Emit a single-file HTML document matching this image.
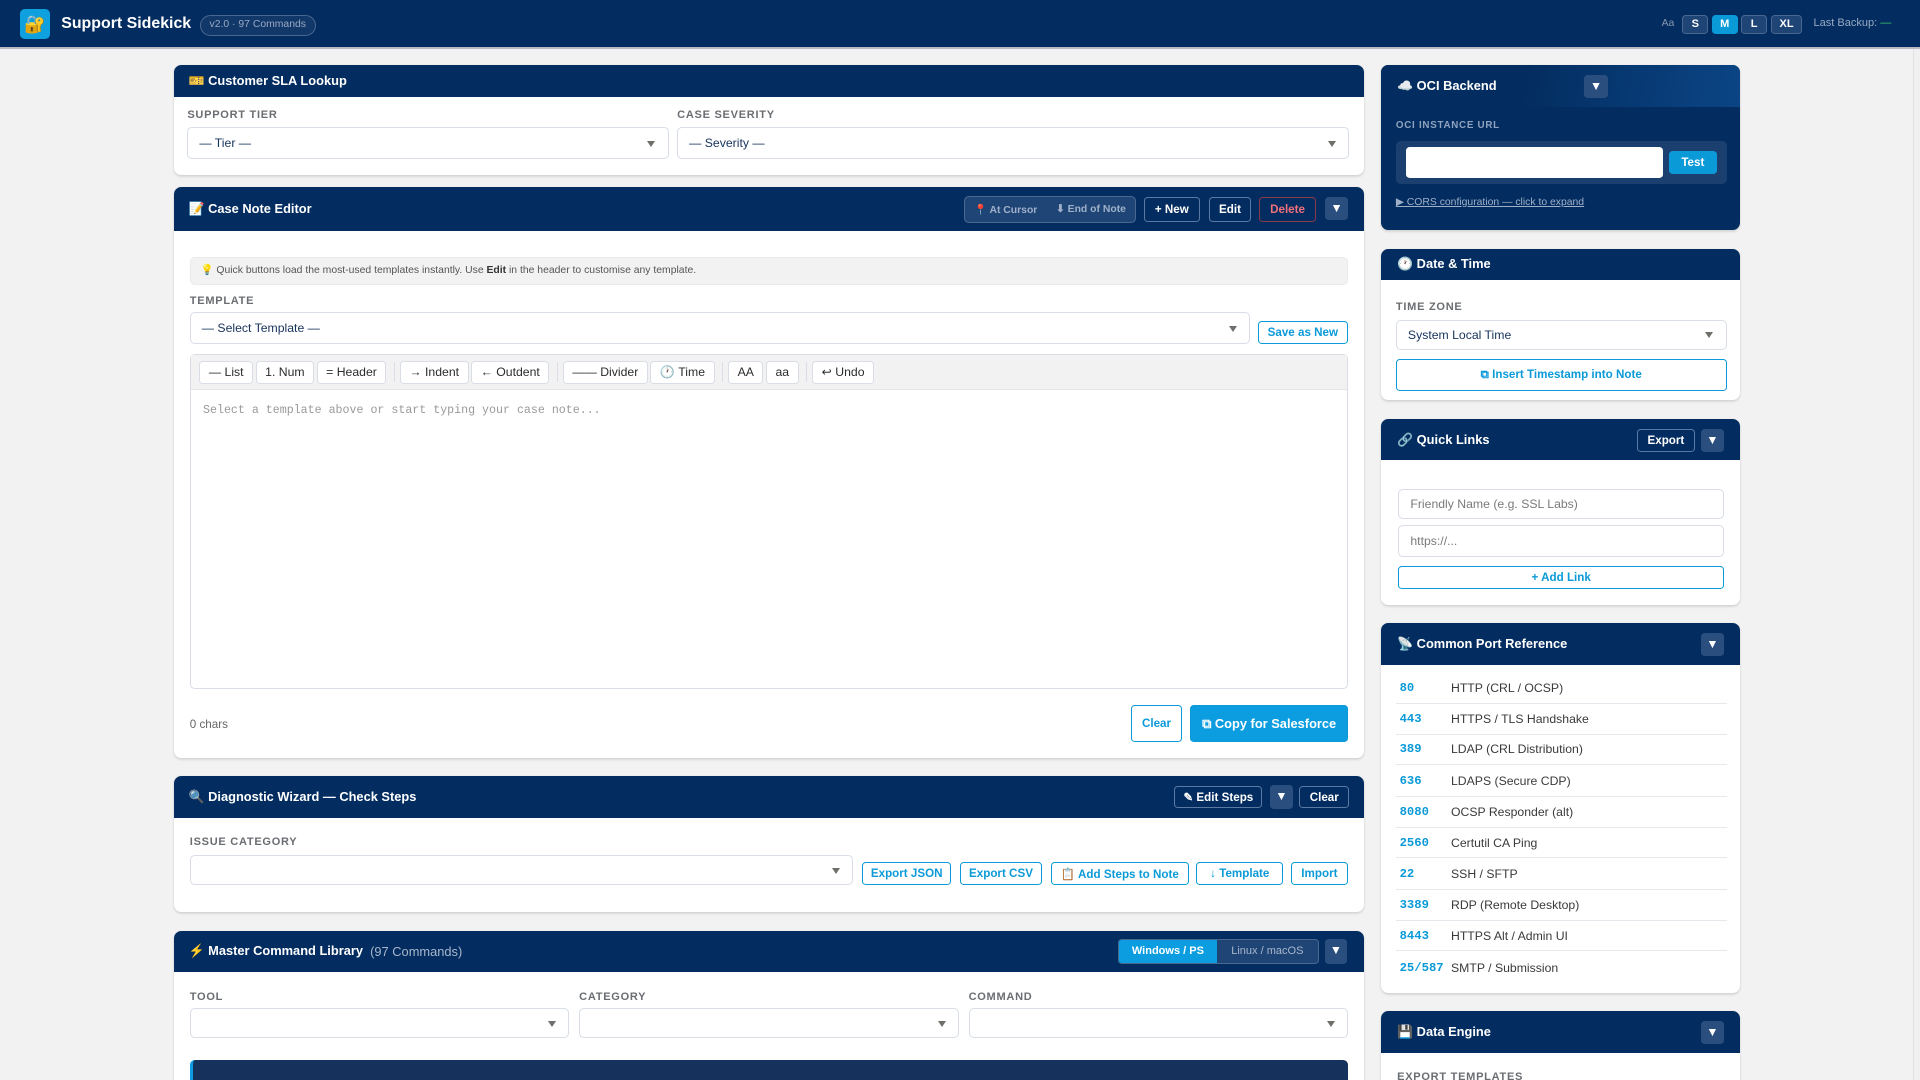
<!DOCTYPE html>
<html><head><meta charset="utf-8"><style>
html{zoom:1.22449;overflow:hidden;height:882px}
*{box-sizing:border-box;margin:0;padding:0}
body{width:1568px;height:882px;overflow:hidden;background:#f3f2f2;font-family:"Liberation Sans",sans-serif;color:#1d2b3f;font-size:11px}
#w{position:relative;width:1568px;height:882px;overflow:hidden}
.top{position:absolute;left:0;top:0;width:1568px;height:40px;background:#032d60;border-bottom:2px solid #b8bcc2}
.logo{position:absolute;left:16px;top:7px;width:25px;height:25px;background:#0fa0e0;border-radius:4px;font-size:14px;text-align:center;line-height:25px}
.ttl{position:absolute;left:50px;top:12px;color:#fff;font-weight:bold;font-size:13px}
.badge{position:absolute;left:163px;top:12px;width:95px;height:17px;border:1px solid #4a6790;border-radius:9px;color:#98a9c2;font-size:8.5px;text-align:center;line-height:15px;background:#12386a}
.sz{position:absolute;top:12px;height:16px;border:1px solid #4a6790;border-radius:3px;background:#1f4577;color:#fff;font-size:9px;font-weight:bold;text-align:center;line-height:14px}
.card{position:absolute;background:#fff;border-radius:6px;box-shadow:0 1px 2px rgba(0,0,0,.15);overflow:hidden}
.hd{background:#032d60;color:#fff;font-weight:bold;font-size:10.5px;padding-left:12px;display:flex;align-items:center;position:relative}
.lbl{position:absolute;font-size:9px;color:#6a6d72;letter-spacing:.6px;font-weight:bold}
.sel{position:absolute;border:1px solid #d8dde6;border-radius:4px;background:#fff;color:#16325c;font-size:10px;padding-left:9px;display:flex;align-items:center}
.sel:after{content:"";position:absolute;right:10px;top:50%;margin-top:-2px;border:4px solid transparent;border-top:5px solid #706e6b;border-bottom:0}
.ob{position:absolute;border:1px solid #0b9ad8;border-radius:3px;color:#0b9ad8;font-weight:bold;font-size:9.5px;display:flex;align-items:center;justify-content:center;background:#fff}
.hb{position:absolute;border:1px solid #5b7aa3;border-radius:3px;color:#fff;font-weight:bold;font-size:9.5px;display:flex;align-items:center;justify-content:center}
.dd{position:absolute;width:19px;height:19px;background:#2a4f7e;border-radius:3px;color:#fff;font-size:10px;text-align:center;line-height:19px}
.tb{display:inline-block;height:19px;border:1px solid #d8dde6;border-radius:3px;background:#fff;font-size:10px;line-height:17px;padding:0 7px;margin-right:2px;color:#2b2b2b;vertical-align:top}
.sep{display:inline-block;width:1px;height:16px;background:#d8dde6;margin:1px 4px 0 4px;vertical-align:top}
.inp{position:absolute;border:1px solid #d8dde6;border-radius:4px;background:#fff;color:#7a7a7a;font-size:10px;padding-left:9px;display:flex;align-items:center}
.pr{position:absolute;left:12px;width:270px;height:25px;border-bottom:1px solid #e5e8ed;display:flex;align-items:center;font-size:10px;color:#3a3a3a}
.pr b{font-family:"Liberation Mono",monospace;color:#0b9ad8;width:45px;padding-left:3px;font-size:10px}
</style></head><body><div id="w">
<div class="top">
<div class="logo">🔐</div>
<div class="ttl">Support Sidekick</div>
<div class="badge">v2.0 · 97 Commands</div>
<div style="position:absolute;left:1357px;top:15px;color:#8798b0;font-size:8.5px">Aa</div>
<div class="sz" style="left:1374px;width:21px">S</div>
<div class="sz" style="left:1398px;width:21px;background:#0b9ad8;border-color:#0b9ad8">M</div>
<div class="sz" style="left:1422px;width:21px">L</div>
<div class="sz" style="left:1446px;width:26px">XL</div>
<div style="position:absolute;left:1481px;top:14px;color:#98a9c2;font-size:9px">Last Backup: <span style="color:#3ec46d">—</span></div>
</div>
<div style="position:absolute;left:1562px;top:40px;width:6px;height:842px;background:#f0f0f0;border-left:1px solid #e0e0e0"></div>

<div class="card" style="left:142px;top:53px;width:972px;height:90px">
<div class="hd" style="height:26px">🎫&nbsp;Customer SLA Lookup</div>
<div class="lbl" style="left:11px;top:36px">SUPPORT TIER</div>
<div class="sel" style="left:11px;top:51px;width:393px;height:26px">— Tier —</div>
<div class="lbl" style="left:411px;top:36px">CASE SEVERITY</div>
<div class="sel" style="left:411px;top:51px;width:549px;height:26px">— Severity —</div>
</div>

<div class="card" style="left:142px;top:153px;width:972px;height:466px">
<div class="hd" style="height:36px">📝&nbsp;Case Note Editor
<div style="position:absolute;left:645px;top:7px;width:141px;height:22px;border:1px solid #4a6790;border-radius:4px;background:#1f4577;color:#9fb0c8;font-size:8.5px;display:flex;align-items:center;justify-content:space-around">📍 At Cursor <span>⬇ End of Note</span></div>
<div class="hb" style="left:792px;top:8px;width:46px;height:20px">+ New</div>
<div class="hb" style="left:845px;top:8px;width:35px;height:20px">Edit</div>
<div class="hb" style="left:886px;top:8px;width:47px;height:20px;color:#f0707a;border-color:#8a3a4a">Delete</div>
<div class="dd" style="left:940px;top:8px">▼</div>
</div>
<div style="position:absolute;left:13px;top:57px;width:946px;height:23px;background:#f3f2f2;border:1px solid #eceae8;border-radius:4px;font-size:8.5px;color:#555;padding-left:8px;line-height:21px">💡 Quick buttons load the most-used templates instantly. Use <b style="color:#333">Edit</b> in the header to customise any template.</div>
<div class="lbl" style="left:13px;top:88px">TEMPLATE</div>
<div class="sel" style="left:13px;top:102px;width:866px;height:26px">— Select Template —</div>
<div class="ob" style="left:885px;top:109px;width:74px;height:19px">Save as New</div>
<div style="position:absolute;left:13px;top:136px;width:946px;height:274px;border:1px solid #d8dde6;border-radius:4px">
<div style="height:29px;background:#f3f2f2;border-bottom:1px solid #e5e5e5;padding:5px 0 0 7px;white-space:nowrap">
<span class="tb">— List</span><span class="tb">1. Num</span><span class="tb">= Header</span><span class="sep"></span><span class="tb">→ Indent</span><span class="tb">← Outdent</span><span class="sep"></span><span class="tb">—— Divider</span><span class="tb">🕐 Time</span><span class="sep"></span><span class="tb">AA</span><span class="tb">aa</span><span class="sep"></span><span class="tb">↩ Undo</span>
</div>
<div style="padding:11px 10px;font-family:'Liberation Mono',monospace;font-size:9.5px;color:#9a9a9a">Select a template above or start typing your case note...</div>
</div>
<div style="position:absolute;left:13px;top:433px;font-size:9.5px;color:#666">0 chars</div>
<div class="ob" style="left:782px;top:423px;width:41px;height:30px">Clear</div>
<div class="ob" style="left:830px;top:423px;width:129px;height:30px;background:#0b9ddf;color:#fff;font-size:10.5px">⧉ Copy for Salesforce</div>
</div>

<div class="card" style="left:142px;top:634px;width:972px;height:111px">
<div class="hd" style="height:34px">🔍&nbsp;Diagnostic Wizard — Check Steps
<div class="hb" style="left:817px;top:8px;width:72px;height:18px">✎ Edit Steps</div>
<div class="dd" style="left:895px;top:7px;height:20px">▼</div>
<div class="hb" style="left:919px;top:8px;width:41px;height:18px">Clear</div>
</div>
<div class="lbl" style="left:13px;top:49px">ISSUE CATEGORY</div>
<div class="sel" style="left:13px;top:64px;width:542px;height:25px"></div>
<div class="ob" style="left:562px;top:70px;width:73px;height:19px">Export JSON</div>
<div class="ob" style="left:642px;top:70px;width:67px;height:19px">Export CSV</div>
<div class="ob" style="left:716px;top:70px;width:113px;height:19px">📋 Add Steps to Note</div>
<div class="ob" style="left:835px;top:70px;width:71px;height:19px">↓ Template</div>
<div class="ob" style="left:912px;top:70px;width:47px;height:19px">Import</div>
</div>

<div class="card" style="left:142px;top:760px;width:972px;height:200px">
<div class="hd" style="height:34px">⚡&nbsp;Master Command Library&nbsp;&nbsp;<span style="font-weight:normal;color:#a9b6c9">(97 Commands)</span>
<div style="position:absolute;left:771px;top:7px;width:164px;height:20px;border:1px solid #4a6790;border-radius:3px;background:#1f4577;display:flex;font-size:9px;overflow:hidden">
<div style="width:80px;background:#0b9ddf;text-align:center;line-height:18px">Windows / PS</div><div style="flex:1;text-align:center;line-height:18px;color:#a9b6c9;font-weight:normal">Linux / macOS</div></div>
<div class="dd" style="left:940px;top:7px;height:20px;width:18px">▼</div>
</div>
<div class="lbl" style="left:13px;top:49px">TOOL</div>
<div class="lbl" style="left:331px;top:49px">CATEGORY</div>
<div class="lbl" style="left:649px;top:49px">COMMAND</div>
<div class="sel" style="left:13px;top:63px;width:310px;height:25px"></div>
<div class="sel" style="left:331px;top:63px;width:310px;height:25px"></div>
<div class="sel" style="left:649px;top:63px;width:310px;height:25px"></div>
<div style="position:absolute;left:13px;top:106px;width:946px;height:80px;background:#16325c;border-left:3px solid #0b9ddf;border-radius:4px"></div>
</div>

<div class="card" style="left:1128px;top:53px;width:293px;height:135px;background:#032d60">
<div class="hd" style="height:34px;background:linear-gradient(100deg,#032d60 40%,#0b4585);padding-left:13px">☁️&nbsp;OCI Backend
<div class="dd" style="left:166px;top:8px">▼</div></div>
<div class="lbl" style="left:12px;top:45px;color:#8fa2bf;font-size:8px">OCI INSTANCE URL</div>
<div style="position:absolute;left:12px;top:62px;width:270px;height:35px;background:#1b3f6e;border-radius:4px"></div>
<div style="position:absolute;left:20px;top:67px;width:210px;height:25px;background:#fff;border-radius:3px"></div>
<div style="position:absolute;left:235px;top:70px;width:39px;height:19px;background:#0b9ad8;border-radius:3px;color:#fff;font-weight:bold;font-size:9.5px;text-align:center;line-height:19px">Test</div>
<div style="position:absolute;left:12px;top:107px;color:#9fb0c8;font-size:8.5px;text-decoration:underline">▶ CORS configuration — click to expand</div>
</div>

<div class="card" style="left:1128px;top:203px;width:293px;height:124px">
<div class="hd" style="height:26px;padding-left:13px">🕐&nbsp;Date &amp; Time</div>
<div class="lbl" style="left:12px;top:43px">TIME ZONE</div>
<div class="sel" style="left:12px;top:58px;width:270px;height:25px">System Local Time</div>
<div class="ob" style="left:12px;top:90px;width:270px;height:26px;font-size:9.5px">⧉ Insert Timestamp into Note</div>
</div>

<div class="card" style="left:1128px;top:342px;width:293px;height:152px">
<div class="hd" style="height:34px;padding-left:13px">🔗&nbsp;Quick Links
<div class="hb" style="left:209px;top:8px;width:47px;height:19px">Export</div>
<div class="dd" style="left:261px;top:8px">▼</div></div>
<div class="inp" style="left:14px;top:57px;width:266px;height:25px">Friendly Name (e.g. SSL Labs)</div>
<div class="inp" style="left:14px;top:87px;width:266px;height:26px">https://...</div>
<div class="ob" style="left:14px;top:120px;width:266px;height:19px">+ Add Link</div>
</div>

<div class="card" style="left:1128px;top:509px;width:293px;height:302px">
<div class="hd" style="height:34px;padding-left:13px">📡&nbsp;Common Port Reference
<div class="dd" style="left:261px;top:8px">▼</div></div>
<div class="pr" style="top:41px"><b>80</b>HTTP (CRL / OCSP)</div>
<div class="pr" style="top:66px"><b>443</b>HTTPS / TLS Handshake</div>
<div class="pr" style="top:91px"><b>389</b>LDAP (CRL Distribution)</div>
<div class="pr" style="top:117px"><b>636</b>LDAPS (Secure CDP)</div>
<div class="pr" style="top:142px"><b>8080</b>OCSP Responder (alt)</div>
<div class="pr" style="top:167px"><b>2560</b>Certutil CA Ping</div>
<div class="pr" style="top:193px"><b>22</b>SSH / SFTP</div>
<div class="pr" style="top:218px"><b>3389</b>RDP (Remote Desktop)</div>
<div class="pr" style="top:243px"><b>8443</b>HTTPS Alt / Admin UI</div>
<div class="pr" style="top:269px;border:0"><b>25/587</b>SMTP / Submission</div>
</div>

<div class="card" style="left:1128px;top:826px;width:293px;height:120px">
<div class="hd" style="height:34px;padding-left:13px">💾&nbsp;Data Engine
<div class="dd" style="left:261px;top:8px">▼</div></div>
<div class="lbl" style="left:13px;top:49px">EXPORT TEMPLATES</div>
</div>
</div></body></html>
